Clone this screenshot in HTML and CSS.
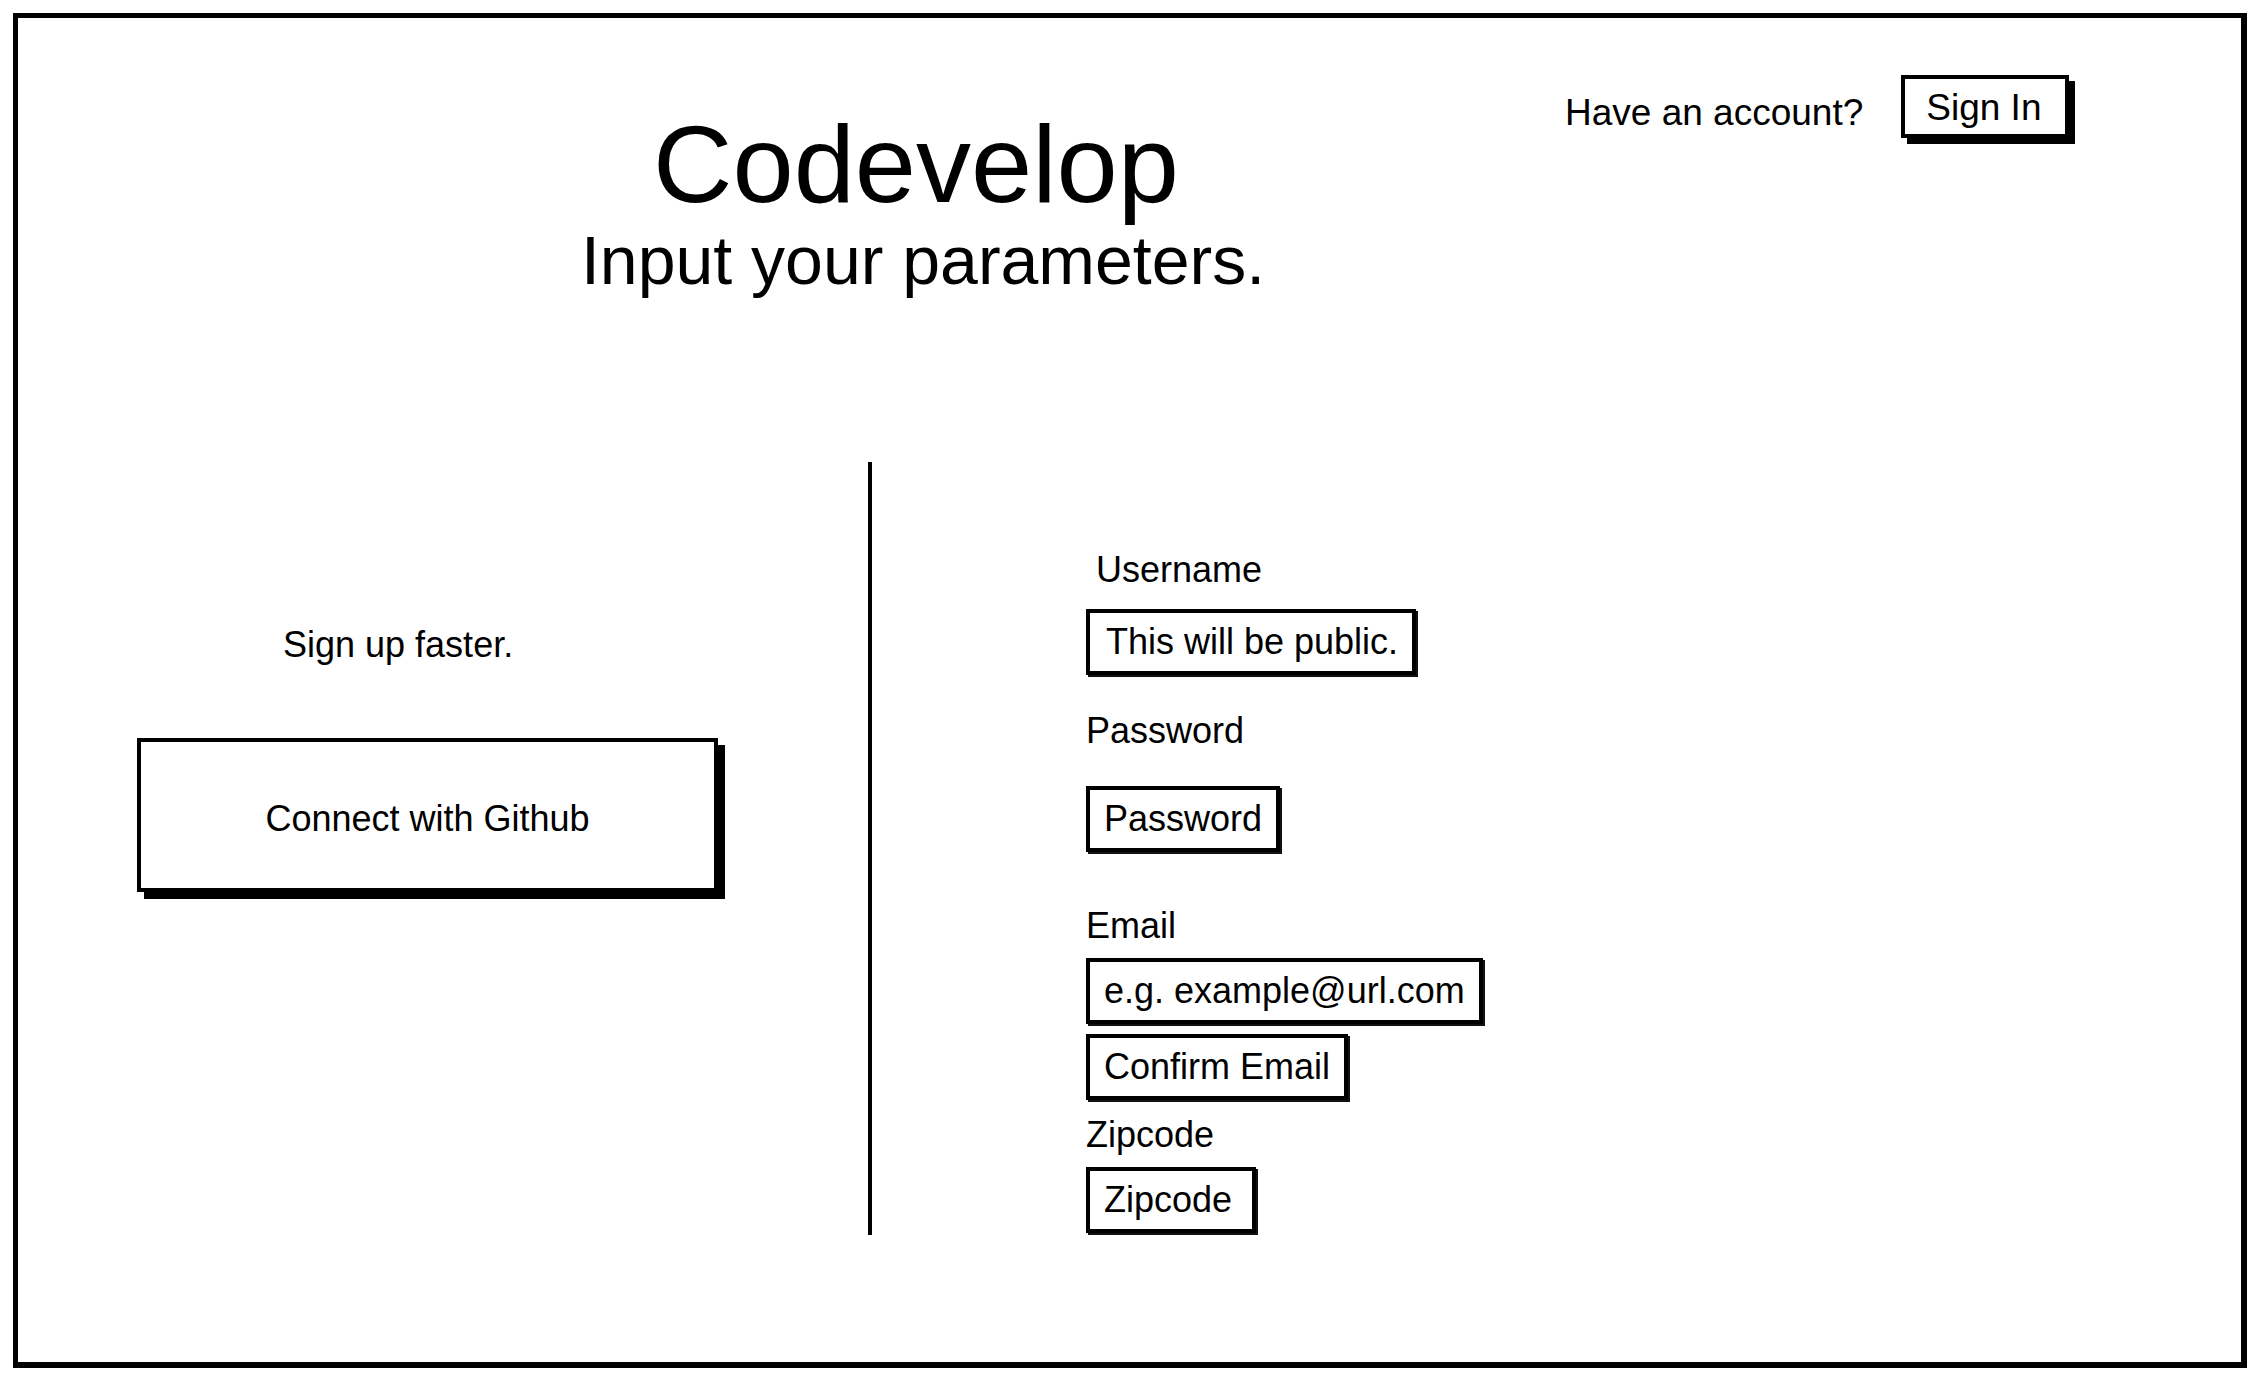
FILE: index.html
```html
<!DOCTYPE html>
<html lang="en">
<head>
<meta charset="utf-8">
<title>Codevelop – Sign up</title>
<link rel="stylesheet" href="styles.css">
</head>
<body>
<div class="frame">
  <header class="header">
    <div class="brand">
      <h1 class="title">Codevelop</h1>
      <p class="subtitle">Input your parameters.</p>
    </div>
    <div class="account">
      <span class="account-text">Have an account?</span>
      <button class="btn signin">Sign In</button>
    </div>
  </header>
  <main class="main">
    <section class="left">
      <p class="lead">Sign up faster.</p>
      <button class="btn github">Connect with Github</button>
    </section>
    <div class="divider"></div>
    <section class="right">
      <label class="label label-user">Username</label>
      <div class="field f-user">This will be public.</div>
      <label class="label label-pass">Password</label>
      <div class="field f-pass">Password</div>
      <label class="label label-email">Email</label>
      <div class="field f-email">e.g. example@url.com</div>
      <div class="field f-confirm">Confirm Email</div>
      <label class="label label-zip">Zipcode</label>
      <div class="field f-zip">Zipcode</div>
    </section>
  </main>
</div>
</body>
</html>
```
FILE: styles.css
```css
html, body {
  margin: 0;
  padding: 0;
  background: #fff;
}
body {
  font-family: "Liberation Sans", Arial, sans-serif;
  color: #000;
  font-size: 36px;
  line-height: 42px;
}
.frame {
  box-sizing: border-box;
  margin: 13px 0 0 13px;
  width: 2234px;
  height: 1355px;
  border: 5px solid #000;
  border-right-width: 6px;
  border-bottom-width: 6px;
  display: flex;
  flex-direction: column;
}
.header {
  display: flex;
  align-items: flex-start;
  height: 444px;
  flex: none;
}
.brand {
  margin: 91px 0 0 398px;
  width: 1000px;
  text-align: center;
}
.title {
  margin: 0;
  font-size: 110px;
  line-height: 110px;
  font-weight: normal;
}
.subtitle {
  margin: 7px 0 0;
  padding-left: 14px;
  font-size: 68px;
  line-height: 68px;
}
.account {
  display: flex;
  align-items: flex-start;
  margin: 57px 0 0 149px;
}
.account-text {
  margin-top: 17px;
  font-size: 37px;
}
.btn {
  font-family: inherit;
  color: #000;
  background: #fff;
  border: 4px solid #000;
  box-shadow: 6px 6px 0 #000;
  box-sizing: border-box;
  cursor: pointer;
}
.signin {
  margin-left: 38px;
  height: 63px;
  padding: 8px 24px 5px 21px;
  font-size: 37px;
  line-height: 42px;
}
.main {
  display: flex;
  align-items: flex-start;
  flex: 1;
}
.left {
  width: 850px;
  display: flex;
  flex-direction: column;
  align-items: flex-start;
}
.lead {
  margin: 162px 0 0 265px;
}
.github {
  margin: 72px 0 0 119px;
  width: 581px;
  height: 154px;
  padding-top: 8px;
  font-size: 36px;
  line-height: 42px;
  display: flex;
  align-items: center;
  justify-content: center;
  box-shadow: 7px 7px 0 #000;
}
.divider {
  width: 4px;
  height: 773px;
  background: #000;
  flex: none;
}
.right {
  padding-left: 214px;
  display: flex;
  flex-direction: column;
  align-items: flex-start;
}
.label {
  display: block;
}
.field {
  box-sizing: border-box;
  height: 66px;
  border: 4px solid #000;
  box-shadow: 2px 2px 0 #111;
  padding: 0 14px 0 14px;
  display: flex;
  align-items: center;
  white-space: nowrap;
}
.label-user { margin: 87px 0 0 10px; }
.f-user { margin-top: 18px; padding-left: 16px; }
.label-pass { margin-top: 35px; }
.f-pass { margin-top: 34px; }
.label-email { margin-top: 53px; }
.f-email { margin-top: 11px; }
.f-confirm { margin-top: 10px; }
.label-zip { margin-top: 14px; }
.f-zip { margin-top: 11px; padding-right: 20px; }
```
